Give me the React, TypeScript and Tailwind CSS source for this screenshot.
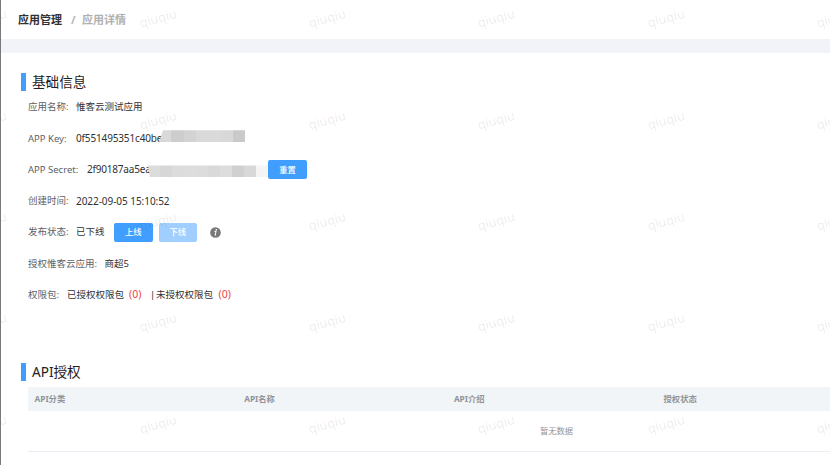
import React from "react";

const xs = [-13, 156.5, 326, 495, 664.5, 834];
const ys = [18, 119.5, 221, 322, 423.5];

function Watermarks() {
  return (
    <div className="pointer-events-none absolute inset-0 overflow-hidden">
      {ys.map((y) =>
        xs.map((x) => (
          <span
            key={`${x}-${y}`}
            className="absolute -translate-x-1/2 -translate-y-1/2 -rotate-[15deg] text-[12.7px] leading-none text-black/[0.09]"
            style={{ left: x, top: y }}
          >
            qiuqiu
          </span>
        )),
      )}
    </div>
  );
}

function Row({ label, labelWidth, children }: { label: string; labelWidth: string; children: React.ReactNode }) {
  return (
    <div className="flex h-[31.25px] items-center text-[9.5px] text-[#303133]">
      <span className={`${labelWidth} shrink-0 text-[#606266]`}>{label}</span>
      {children}
    </div>
  );
}

function Button({ children, className }: { children: React.ReactNode; className: string }) {
  return (
    <button className={`flex h-[19px] w-[38.5px] shrink-0 items-center justify-center rounded-[2px] text-[8.3px] font-medium text-white ${className}`}>
      {children}
    </button>
  );
}

function Title({ children }: { children: React.ReactNode }) {
  return (
    <h2 className="flex h-[18px] items-center text-[13.6px] leading-none text-[#1f2022]">
      <span className="mr-[6px] h-[18px] w-[5px] bg-[#409eff]" />
      {children}
    </h2>
  );
}

function Mosaic({ cells, className }: { cells: string[]; className: string }) {
  return (
    <span className={`flex h-3 shrink-0 ${className}`}>
      {cells.map((c, i) => (
        <span key={i} className={`h-full flex-1 ${c}`} />
      ))}
    </span>
  );
}

export default function App() {
  return (
    <div className="relative flex h-[465px] w-[830px] flex-col overflow-hidden border-l border-[#77797c] bg-white font-['Noto_Sans','Noto_Sans_CJK_SC',sans-serif] whitespace-nowrap">
      <header className="flex h-[39px] items-center pt-px pl-[17px] text-[11px] font-bold text-[#303133]">
        <span className="w-[53px]">应用管理</span>
        <span className="w-[11px] text-[#b4b6ba]">/</span>
        <span className="text-[#b0b0b0]">应用详情</span>
      </header>
      <div className="h-[14px] shrink-0 bg-[#f1f3f8]" />
      <main className="pt-5 pl-5">
        <Title>基础信息</Title>
        <section className="h-[272px] pt-[0.8px] pl-[7px]">
          <Row label="应用名称:" labelWidth="w-[48px]">惟客云测试应用</Row>
          <Row label="APP Key:" labelWidth="w-[48px]">
            <span className="w-[83px] text-[10px] tracking-[-0.15px]">0f551495351c40be</span>
            <Mosaic
              className="relative mb-[5px] w-[86px] [clip-path:polygon(4px_0,100%_0,100%_100%,0_100%)]"
              cells={["bg-[#d9d9d9]", "bg-[#cdcdcd]", "bg-[#d3d3d3]", "bg-[#d9d9d9]", "bg-[#dadada]", "bg-[#d8d8d8]", "bg-[#cacaca]"]}
            />
          </Row>
          <Row label="APP Secret:" labelWidth="w-[59px]">
            <span className="w-[61px] text-[10px] tracking-[-0.2px]">2f90187aa5ea</span>
            <Mosaic
              className="relative mt-[3px] w-[120.3px] [clip-path:polygon(0_0,100%_0,100%_100%,2px_100%)]"
              cells={["bg-[#dcdcdc]", "bg-[#d7d7d7]", "bg-[#dcdcdc]", "bg-[#dddddd]", "bg-[#dcdcdc]", "bg-[#d9d9d9]", "bg-[#dddddd]", "bg-[#d0d0d0]", "bg-[#d8d8d8]", "bg-[#f4f4f4]"]}
            />
            <Button className="bg-[#409eff]">重置</Button>
          </Row>
          <Row label="创建时间:" labelWidth="w-[48px]">
            <span className="text-[10px] tracking-[-0.05px]">2022-09-05 15:10:52</span>
          </Row>
          <Row label="发布状态:" labelWidth="w-[48px]">
            <span className="w-[38px]">已下线</span>
            <Button className="mr-[6px] bg-[#409eff]">上线</Button>
            <Button className="mr-[12.5px] bg-[#a0cfff]">下线</Button>
            <svg viewBox="0 0 12 12" className="size-[11px]">
              <circle cx="6" cy="6" r="5.8" fill="#77797b" />
              <circle cx="6.8" cy="3.2" r=".9" fill="#fff" />
              <path d="M4.9 5h1.6L5.7 8.7h.8" fill="none" stroke="#fff" strokeWidth="1.1" />
            </svg>
          </Row>
          <Row label="授权惟客云应用:" labelWidth="w-[76.5px]">商超5</Row>
          <Row label="权限包:" labelWidth="w-[39px]">
            <span className="w-[62px]">已授权权限包</span>
            <span className="w-[21px] text-[10.5px] text-[#f04444]">(0)</span>
            <span className="w-[6px]">|</span>
            <span className="w-[62.5px]">未授权权限包</span>
            <span className="text-[10.5px] text-[#f04444]">(0)</span>
          </Row>
        </section>
        <Title>API授权</Title>
        <table className="mt-[6px] ml-[7px] w-[1057px] table-fixed border-collapse text-left text-[8.3px] text-[#909399]">
          <thead>
            <tr className="h-6 bg-[#f1f5f8]">
              <th className="w-[209.7px] p-0 pl-[6.5px]">API分类</th>
              <th className="w-[209.7px] p-0 pl-[6.5px]">API名称</th>
              <th className="w-[209.7px] p-0 pl-[6.5px]">API介绍</th>
              <th className="p-0 pl-[6.5px]">授权状态</th>
            </tr>
          </thead>
          <tbody>
            <tr className="h-10 border-b border-[#ebeef5]">
              <td colSpan={4} className="p-0 text-center">暂无数据</td>
            </tr>
          </tbody>
        </table>
      </main>
      <div className="absolute top-[245px] -left-px h-[22px] w-px bg-[#333]" />
      <Watermarks />
    </div>
  );
}
